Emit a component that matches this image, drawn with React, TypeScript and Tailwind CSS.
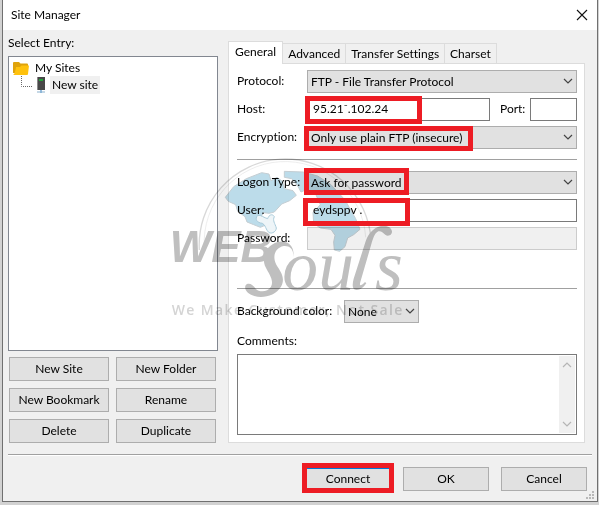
import type { ReactNode } from "react";

const tabs = ["General", "Advanced", "Transfer Settings", "Charset"];

const entryActions = [
  "New Site",
  "New Folder",
  "New Bookmark",
  "Rename",
  "Delete",
  "Duplicate",
];

const buttonClass =
  "h-6 border border-[#adadad] bg-[#e1e1e1] text-center leading-4";

function Chevron({ className = "" }: { className?: string }) {
  return (
    <svg
      viewBox="0 0 10 6"
      className={`pointer-events-none h-1.5 w-2.5 ${className}`}
      fill="none"
      stroke="currentColor"
      strokeWidth="1.2"
    >
      <path d="M1 1l4 4 4-4" />
    </svg>
  );
}

function Highlight({ className }: { className: string }) {
  return (
    <span
      aria-hidden
      className={`pointer-events-none absolute z-30 border-[#ed1c24] ${className}`}
    />
  );
}

function Row({
  id,
  label,
  children,
}: {
  id: string;
  label: string;
  children: ReactNode;
}) {
  return (
    <div className="flex h-[23px]">
      <label htmlFor={id} className="w-[70px] shrink-0 pt-[3px] leading-4 whitespace-nowrap">
        {label}
      </label>
      <div className="relative flex min-w-0 flex-1">{children}</div>
    </div>
  );
}

function Select({ id, value }: { id: string; value: string }) {
  return (
    <div className="relative flex-1">
      <select
        id={id}
        defaultValue={value}
        className="h-[23px] w-full appearance-none border border-[#adadad] bg-[#e1e1e1] pl-[3px]"
      >
        <option>{value}</option>
      </select>
      <Chevron className="absolute top-2 right-1 text-[#444]" />
    </div>
  );
}

function Watermark() {
  return (
    <svg
      aria-hidden
      viewBox="0 0 735 495"
      className="pointer-events-none absolute top-40 left-[162px] z-20 h-[165px] w-[245px] overflow-visible mix-blend-multiply"
    >
      <path
        d="M103 270A252 252 0 0 1 618 240"
        fill="none"
        stroke="#d8d8d8"
        strokeWidth="4"
      />
      <path
        d="M118 262A238 238 0 0 1 602 232"
        fill="none"
        stroke="#e4e4e4"
        strokeWidth="2"
      />
      <g fill="#bcdcea" stroke="#c4cdd2" strokeWidth="3">
        <path d="M181 112L206 80 244 56 290 38 312 42 318 62 336 52 352 64 358 86 384 92 394 106 374 122 350 132 328 156 312 160 296 158 284 176 300 196 286 202 266 194 246 186 240 170 218 154 212 134 190 124Z" />
        <path d="M358 34L414 36 458 48 498 74 540 120 572 176 585 208 566 224 548 234 540 260 524 274 508 270 506 246 510 226 498 208 466 204 446 190 444 158 466 134 450 98 426 88 408 96 396 74 380 56 358 52Z" />
        <path
          d="M278 166C268 178 276 188 292 190C302 194 302 210 312 218C322 222 334 214 334 204C330 190 322 182 328 170C322 160 312 164 308 176C298 174 288 164 278 166Z"
          fill="#eef5f8"
          stroke="#a9cbda"
        />
      </g>
      <g fill="#bfbfbf">
        <text
          x="14"
          y="306"
          fontSize="132"
          fontWeight="700"
          fontStyle="italic"
          fontFamily="'Liberation Sans', sans-serif"
        >
          WEB
        </text>
        <path d="M384 292C388 268 374 256 356 258C328 264 322 292 334 314C348 336 362 354 348 380C332 406 296 416 268 408C248 402 236 388 242 376C250 366 264 374 272 386C284 398 308 396 318 380C328 362 312 342 302 322C288 292 300 258 338 246C366 238 392 258 384 292Z" />
        <text
          x="352"
          y="389"
          fontSize="215"
          fontStyle="italic"
          fontFamily="'Liberation Serif', serif"
        >
          ou
        </text>
        <path d="M574 390C560 388 562 372 566 356L602 244C610 216 634 196 658 197C680 198 688 218 674 226C658 232 656 210 640 214C628 220 624 236 618 256L586 366C582 380 588 378 600 366L604 370C594 384 584 391 574 390Z" />
        <text
          x="630"
          y="389"
          fontSize="215"
          fontStyle="italic"
          fontFamily="'Liberation Serif', serif"
        >
          s
        </text>
      </g>
      <text
        x="20"
        y="464"
        fontSize="42"
        fontWeight="600"
        fill="#d4d4d4"
        className="tracking-widest"
        fontFamily="'Open Sans', sans-serif"
      >
        We Make Customer, Not Sale
      </text>
    </svg>
  );
}

function EntryTree() {
  return (
    <div className="flex-1 border border-[#828790] bg-white pt-[3px] pl-1">
      <div className="flex h-4 items-center gap-1.5">
        <svg viewBox="0 0 16 13" className="h-[13px] w-4">
          <path d="M0 1q0-1 1-1h5l1.500 1.500H14q1 0 1 1V11H0z" fill="#dfa30c" />
          <path d="M3 5h4l1.500-1.500H16L15 12q0 1-1 1H0q2-1 3-8z" fill="#ffc20e" />
        </svg>
        <span>My Sites</span>
      </div>
      <div className="flex h-[18px] items-center">
        <svg viewBox="0 0 12 18" className="ml-2 h-[18px] w-3">
          <path
            d="M.5 0v10.500h11"
            fill="none"
            stroke="#666"
            strokeDasharray="1 1"
          />
        </svg>
        <svg viewBox="0 0 10 16" className="ml-[3px] h-4 w-2.5">
          <path d="M1 0h8v13H1z" fill="#484848" />
          <path d="M1 0h1v13H1z" fill="#8a8a8a" />
          <path d="M3 2h4v2H3z" fill="#23a33a" />
          <path d="M4.500 13h1v3h-1z" fill="#2b7cc4" />
          <path d="M1 14.500h8v1H1z" fill="#8bb0cc" />
        </svg>
        <span className="ml-1 bg-[#f0f0f0] px-0.5 leading-[18px]">New site</span>
      </div>
    </div>
  );
}

export default function App() {
  return (
    <div className="mr-1 bg-[#d2d2d2] pr-px pb-[3px] pl-0.5 font-[Lato,sans-serif] text-xs text-black [font-variant-ligatures:none]">
      <main className="relative border-x border-b border-[#707070] bg-[#f0f0f0]">
        <header className="flex h-[30px] items-center justify-between bg-white pr-[9px] pl-2">
          <h1>Site Manager</h1>
          <button aria-label="Close">
            <svg viewBox="0 0 12 12" className="h-3 w-3" stroke="#111" strokeWidth="1.1">
              <path d="M1 1l10 10M11 1L1 11" />
            </svg>
          </button>
        </header>

        <div className="px-[5px] pb-2.5">
          <div className="flex gap-2.5 pr-[7px]">
            <section className="flex w-[210px] shrink-0 flex-col pt-[5px]">
              <h2 className="mb-[5px] leading-4">Select Entry:</h2>
              <EntryTree />
              <div className="mt-1.5 grid grid-cols-2 gap-[7px] pr-0.5 pl-px">
                {entryActions.map((action) => (
                  <button key={action} className={buttonClass}>
                    {action}
                  </button>
                ))}
              </div>
            </section>

            <section className="min-w-0 flex-1 pt-[11px]">
              <div role="tablist" className="flex h-[22px] items-end">
                {tabs.map((tab, i) => (
                  <button
                    key={tab}
                    role="tab"
                    aria-selected={i === 0}
                    className={
                      i === 0
                        ? "relative z-10 -mb-px h-[23px] border-x border-t border-[#dcdcdc] bg-white px-1.5 pb-0.5 leading-4"
                        : "h-5 border-t border-r border-[#dcdcdc] px-[5px] leading-4"
                    }
                  >
                    {tab}
                  </button>
                ))}
              </div>

              <div className="border border-[#dcdcdc] bg-white pt-1.5 pr-[7px] pb-[7px] pl-2">
                <div className="flex flex-col gap-[5px]">
                  <Row id="protocol" label="Protocol:">
                    <Select id="protocol" value="FTP - File Transfer Protocol" />
                  </Row>
                  <Row id="host" label="Host:">
                    <input
                      id="host"
                      defaultValue="95.21⁻.102.24"
                      className="min-w-0 flex-1 border border-[#7a7a7a] bg-white pb-0.5 pl-[5px]"
                    />
                    <label htmlFor="port" className="w-10 pt-[3px] pl-2.5 leading-4">
                      Port:
                    </label>
                    <input id="port" className="w-[47px] border border-[#7a7a7a] bg-white" />
                    <Highlight className="-top-0.5 -left-0.5 h-7 w-[117px] border-[5px]" />
                  </Row>
                  <Row id="encryption" label="Encryption:">
                    <Select id="encryption" value="Only use plain FTP (insecure)" />
                    <Highlight className="top-0 -left-[3px] h-[25px] w-[169px] border-[5px]" />
                  </Row>
                </div>

                <hr className="mt-2.5 mb-[11px] border-[#a0a0a0]" />

                <div className="flex flex-col gap-[5px]">
                  <Row id="logon" label="Logon Type:">
                    <Select id="logon" value="Ask for password" />
                    <Highlight className="-top-[3px] -left-[3px] h-[27px] w-[105px] border-[5px]" />
                  </Row>
                  <Row id="user" label="User:">
                    <input
                      id="user"
                      defaultValue="eydsppv ."
                      className="min-w-0 flex-1 border border-[#7a7a7a] bg-white pb-0.5 pl-[5px]"
                    />
                    <Highlight className="-top-px -left-1 h-7 w-[107px] border-[5px]" />
                  </Row>
                  <Row id="password" label="Password:">
                    <input
                      id="password"
                      type="password"
                      disabled
                      className="min-w-0 flex-1 border border-[#ccc] bg-[#f0f0f0]"
                    />
                  </Row>
                </div>

                <hr className="mt-[38px] mb-[11px] border-[#a0a0a0]" />

                <div className="flex h-[23px]">
                  <label htmlFor="background" className="w-[107px] pt-[3px] leading-4">
                    Background color:
                  </label>
                  <div className="flex w-[75px]">
                    <Select id="background" value="None" />
                  </div>
                </div>

                <label htmlFor="comments" className="mt-2.5 mb-[5px] block leading-4">
                  Comments:
                </label>
                <div className="flex h-[81px] border border-[#7a7a7a] p-px">
                  <textarea id="comments" className="min-w-0 flex-1 resize-none" />
                  <div className="flex w-4 flex-col items-center justify-between bg-[#f0f0f0] py-1.5 text-[#b5b5b5]">
                    <Chevron className="rotate-180" />
                    <Chevron />
                  </div>
                </div>
              </div>
            </section>
          </div>

          <hr className="mt-[11px] border-[#a0a0a0]" />
          <footer className="flex justify-end gap-3 border-t border-white pt-[11px] pr-[5px]">
            <div className="relative flex">
              <button className={`${buttonClass} w-[86px]`}>Connect</button>
              <Highlight className="-top-1 -left-[3px] h-[30px] w-[92px] border-[5px]" />
              <span className="absolute inset-x-0.5 top-px z-30 h-px bg-[#0078d7]" />
            </div>
            <button className={`${buttonClass} w-[86px]`}>OK</button>
            <button className={`${buttonClass} w-[86px]`}>Cancel</button>
          </footer>
        </div>

        <svg
          aria-hidden
          viewBox="0 0 8 8"
          className="absolute right-[3px] bottom-0.5 h-2 w-2"
          fill="#b8b8b8"
        >
          <path d="M6 0h2v2H6zM3 3h2v2H3zM6 3h2v2H6zM0 6h2v2H0zM3 6h2v2H3zM6 6h2v2H6z" />
        </svg>
        <Watermark />
      </main>
    </div>
  );
}
